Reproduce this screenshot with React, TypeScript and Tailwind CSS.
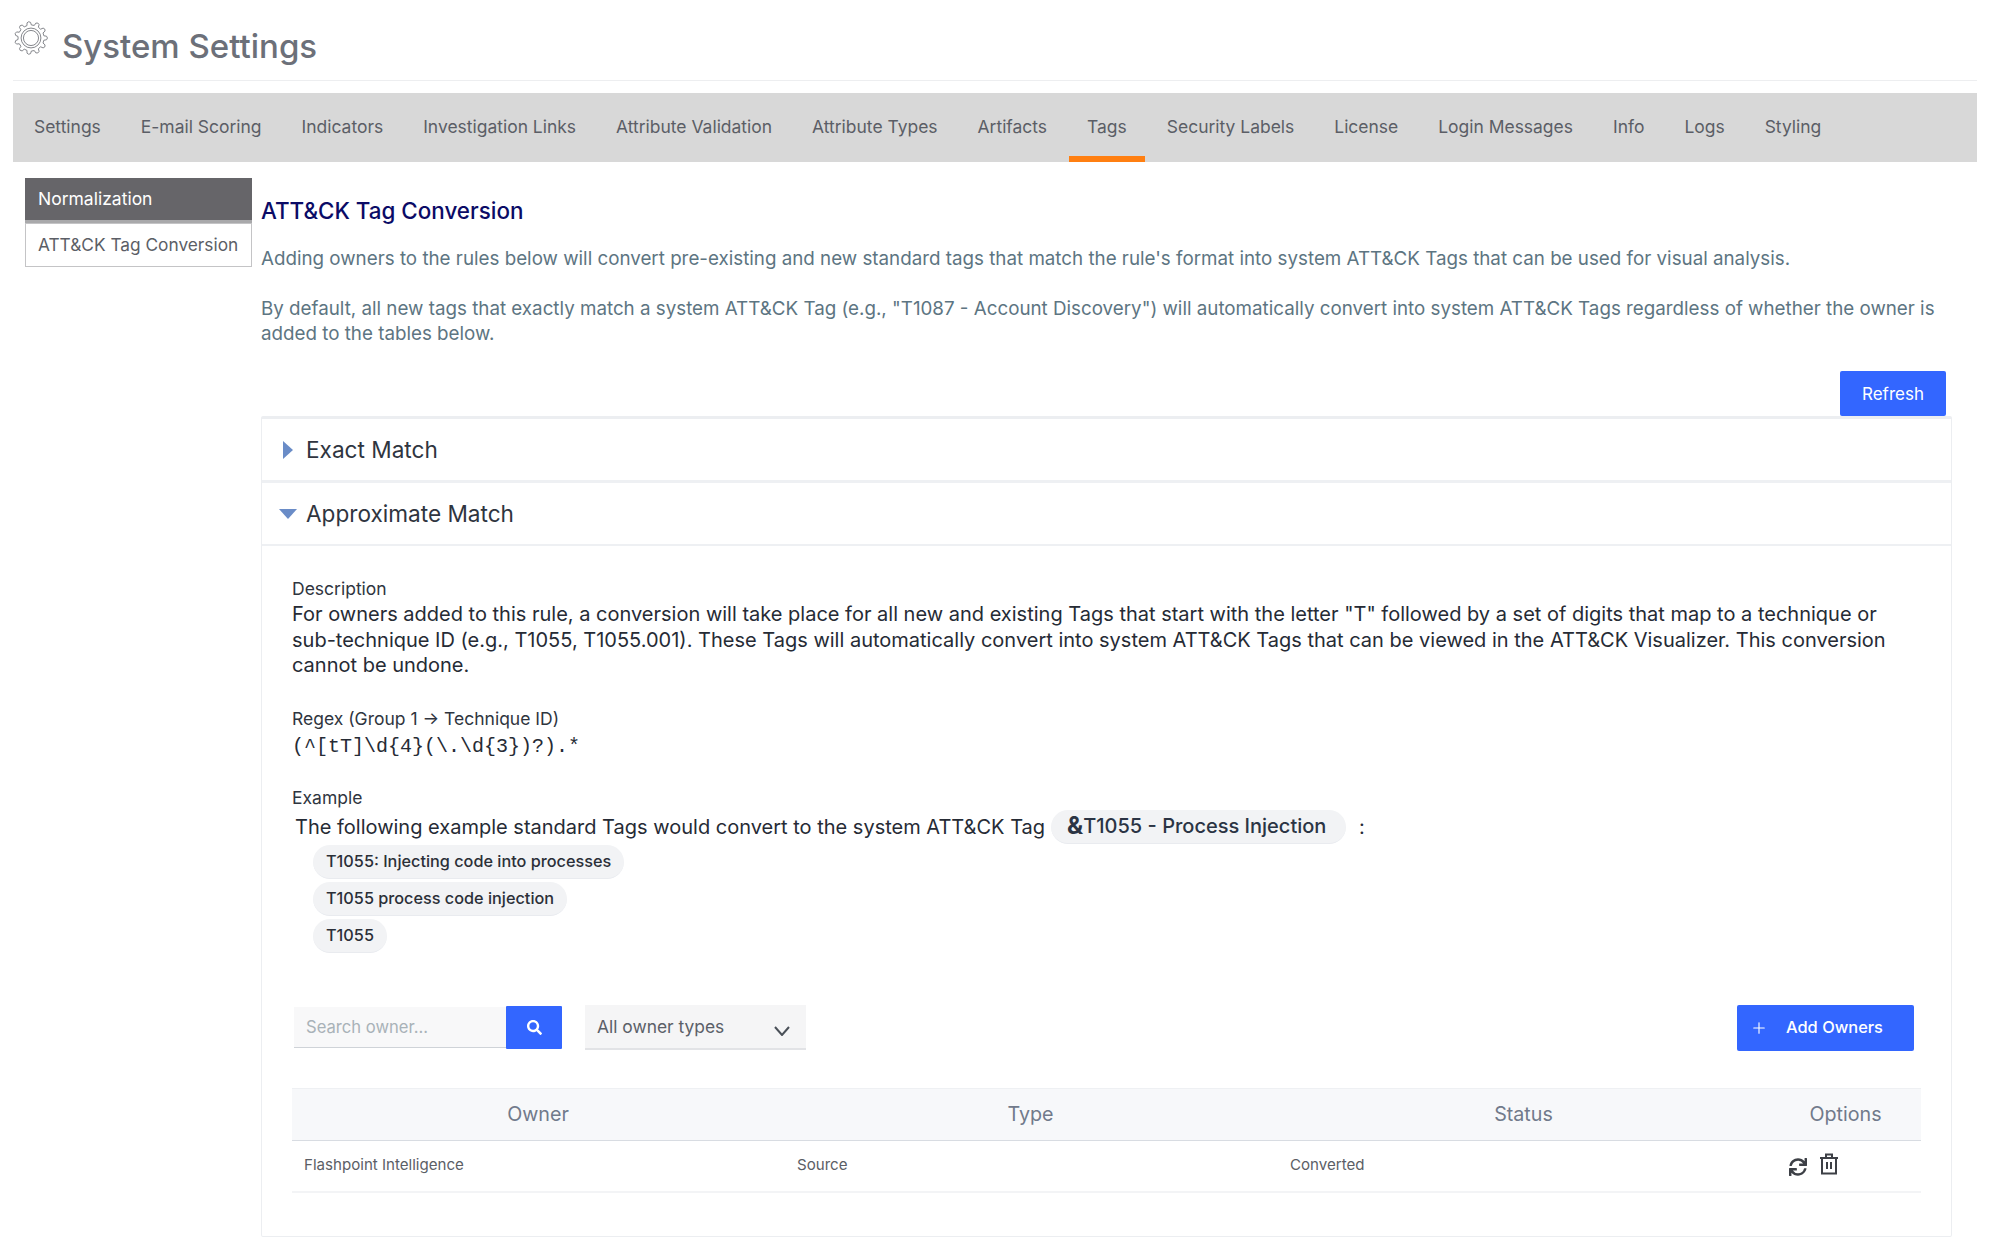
import React from "react";
import { Plus } from "lucide-react";
import { FaSearch, FaSync } from "react-icons/fa";

const tabs = ["Settings","E-mail Scoring","Indicators","Investigation Links","Attribute Validation","Attribute Types","Artifacts","Tags","Security Labels","License","Login Messages","Info","Logs","Styling"];

function gearPath() {
  const teeth = 11;
  const parts: string[] = [];
  for (let i = 0; i < teeth; i++) {
    const a = (i / teeth) * Math.PI * 2;
    const step = (Math.PI * 2) / teeth;
    const pt = (r: number, t: number) => `${(18 + r * Math.cos(t)).toFixed(2)} ${(18 + r * Math.sin(t)).toFixed(2)}`;
    parts.push(`${i === 0 ? "M" : "L"}${pt(13.8, a - step * 0.3)}`);
    parts.push(`Q${pt(17.6, a - step * 0.26)} ${pt(17.4, a)}`);
    parts.push(`Q${pt(17.6, a + step * 0.26)} ${pt(13.8, a + step * 0.3)}`);
  }
  return parts.join(" ") + " Z";
}

function Gear() {
  return (
    <svg className="w-[34px] h-[34px] mt-[21px] ml-[1px]" viewBox="0 0 36 36" fill="none" stroke="#7d8085" strokeWidth="1">
      <path d={gearPath()} />
      <circle cx="18" cy="18" r="10.5" />
      <circle cx="18" cy="18" r="8" />
    </svg>
  );
}

function Pill({ children }: { children: React.ReactNode }) {
  return <div className="w-fit h-[34px] flex items-center rounded-[17px] bg-[#f2f3f5] border-b border-[#e9ebef] px-[13px] text-[16.25px] font-medium text-[#2b2f38]">{children}</div>;
}

export default function App() {
  return (
    <div className="w-[1999px] h-[1260px] overflow-hidden bg-white pl-[13px] pr-[22px] text-[#2f3540]" style={{ fontFamily: "Inter, 'Liberation Sans', sans-serif" }}>
      <div className="h-[81px] border-b border-[#edeef0] flex items-start">
        <Gear />
        <h1 className="ml-[14px] mt-[24px] text-[33px] leading-[44px] font-medium text-[#6c7079]">System Settings</h1>
      </div>
      <nav className="mt-[12px] h-[69px] bg-[#d8d8d8] flex pl-[1px]">
        {tabs.map((t) => (
          <div key={t} className={`h-full mx-[2px] px-[18px] flex items-center text-[17.47px] text-[#5b5e66] ${t === "Tags" ? "border-b-[6px] border-[#ff7f11] pt-[6px]" : ""}`}>{t}</div>
        ))}
      </nav>
      <div className="flex">
        <aside className="ml-[12px] mt-[16px] w-[227px] shrink-0">
          <div className="h-[45px] bg-[#666569] border-b-[3px] border-[#a9a9ab] flex items-center px-[13px] pt-[1px] text-[17.5px] text-white">Normalization</div>
          <div className="h-[44px] bg-white border border-[#c4c4c6] flex items-center pl-[12px] text-[17.3px] text-[#5b5e66] whitespace-nowrap">ATT&amp;CK Tag Conversion</div>
        </aside>
        <main className="ml-[9px] flex-1 min-w-0">
          <h2 className="mt-[33px] text-[22.4px] leading-[32px] font-medium text-[#0b0b66]">ATT&amp;CK Tag Conversion</h2>
          <p className="mt-[19px] text-[18.77px] leading-[26px] text-[#5d7582]">Adding owners to the rules below will convert pre-existing and new standard tags that match the rule's format into system ATT&amp;CK Tags that can be used for visual analysis.</p>
          <p className="mt-[24px] text-[18.77px] leading-[25px] text-[#5d7582] pr-[20px]">By default, all new tags that exactly match a system ATT&amp;CK Tag (e.g., "T1087 - Account Discovery") will automatically convert into system ATT&amp;CK Tags regardless of whether the owner is added to the tables below.</p>
          <div className="mt-[25px] pr-[31px] flex justify-end">
            <button className="w-[106px] h-[45px] pt-[2px] bg-[#3366ff] rounded-[2px] text-white text-[17px]">Refresh</button>
          </div>
          <section className="w-[1691px] h-[821px] border border-[#eceef1] rounded-[2px] border-t-[3px]">
            <div className="h-[64px] border-b-[3px] border-[#eef0f3] flex items-center text-[22.6px] text-[#2f3540]">
              <svg className="ml-[21px] w-[10px] h-[18px]" viewBox="0 0 10 18"><path d="M0 0 L10 9 L0 18 Z" fill="#6a8cc7" /></svg>
              <span className="ml-[13px]">Exact Match</span>
            </div>
            <div className="h-[63px] border-b-[2px] border-[#eef0f3] flex items-center text-[22.6px] text-[#2f3540]">
              <svg className="ml-[17px] w-[18px] h-[10px]" viewBox="0 0 18 10"><path d="M0 0 H18 L9 10 Z" fill="#6a8cc7" /></svg>
              <span className="ml-[9px]">Approximate Match</span>
            </div>
            <div className="px-[30px] pt-[30px]">
              <div className="text-[17.5px] leading-[26px]">Description</div>
              <p className="text-[20px] leading-[25.6px] text-[#262b35] pr-[30px]">For owners added to this rule, a conversion will take place for all new and existing Tags that start with the letter "T" followed by a set of digits that map to a technique or sub-technique ID (e.g., T1055, T1055.001). These Tags will automatically convert into system ATT&amp;CK Tags that can be viewed in the ATT&amp;CK Visualizer. This conversion cannot be undone.</p>
              <div className="mt-[27px] text-[17.5px] leading-[26px]">Regex (Group 1 → Technique ID)</div>
              <div className="mt-[2px] text-[20px] leading-[26px] text-[#262b35]" style={{ fontFamily: "'Liberation Mono', monospace" }}>(^[tT]\d{"{4}"}(\.\d{"{3}"})?).*</div>
              <div className="mt-[25px] text-[17.5px] leading-[26px]">Example</div>
              <div className="ml-[3px] -mt-[1px] flex items-center text-[20px] text-[#262b35] h-[34px]">
                <span>The following example standard Tags would convert to the system ATT&amp;CK Tag</span>
                <div className="ml-[6px] h-[34px] w-[295px] flex items-center rounded-[17px] bg-[#f2f3f5] border-b border-[#e9ebef] pl-[16px] text-[20px] font-medium text-[#2b3444]">
                  <span className="font-bold text-[24px] leading-none">&amp;</span>T1055 - Process Injection
                </div>
                <span className="ml-[13px]">:</span>
              </div>
              <div className="ml-[21px] mt-[1px] flex flex-col gap-[3px]">
                <Pill>T1055: Injecting code into processes</Pill>
                <Pill>T1055 process code injection</Pill>
                <Pill>T1055</Pill>
              </div>
              <div className="mt-[52px] ml-[2px] mr-[7px] flex items-center">
                <div className="w-[212px] h-[41px] bg-[#f8f8f9] border-b border-[#cfd3d8] flex items-center pl-[12px] text-[16.6px] text-[#a9b2b8]">Search owner...</div>
                <button className="w-[56px] h-[43px] bg-[#3366ff] rounded-[1px] flex items-center justify-center text-white"><FaSearch className="w-[15px] h-[15px]" /></button>
                <div className="ml-[23px] w-[221px] h-[45px] bg-[#f5f5f6] border-b-[2px] border-[#e2e3e6] flex items-center justify-between pl-[12px] pr-[16px] text-[17.4px] text-[#5b6068]">
                  <span>All owner types</span>
                  <svg className="w-[16px] h-[10px] mt-[8px]" viewBox="0 0 16 10" fill="none" stroke="#4a5058" strokeWidth="2"><path d="M1 1 L8 9 L15 1" /></svg>
                </div>
                <button className="ml-auto w-[177px] h-[46px] bg-[#3366ff] rounded-[2px] flex items-center text-white text-[16.4px] font-medium">
                  <Plus className="ml-[13px] w-[18px] h-[18px]" strokeWidth={1.5} />
                  <span className="ml-[18px]">Add Owners</span>
                </button>
              </div>
              <div className="mt-[37px] w-[1629px]">
                <div className="h-[53px] bg-[#f7f8fa] border-t border-[#eef0f3] border-b border-b-[#d8dce2] grid grid-cols-[492px_493px_493px_151px] items-center text-center text-[19.7px] text-[#717a8b]">
                  <div>Owner</div><div>Type</div><div>Status</div><div>Options</div>
                </div>
                <div className="h-[52px] border-b-[2px] border-[#f3f4f6] grid grid-cols-[493px_493px_493px_150px] items-center text-[15.1px] text-[#5b5e66]">
                  <div className="pl-[12px]">Flashpoint Intelligence</div>
                  <div className="pl-[12px]">Source</div>
                  <div className="pl-[12px]">Converted</div>
                  <div className="flex items-center pl-[18px] gap-[12px] text-[#3d4046]">
                    <FaSync className="w-[18px] h-[18px] mt-[2px]" />
                    <svg className="w-[20px] h-[22px] mb-[4px]" viewBox="0 0 20 22" fill="none" stroke="#3d4046" strokeWidth="2"><path d="M1 5 H19" /><path d="M7 5 V1.5 H13 V5" /><path d="M3 5 V20.5 H17 V5" /><path d="M8 9 V16 M12 9 V16" /></svg>
                  </div>
                </div>
              </div>
            </div>
          </section>
        </main>
      </div>
    </div>
  );
}
